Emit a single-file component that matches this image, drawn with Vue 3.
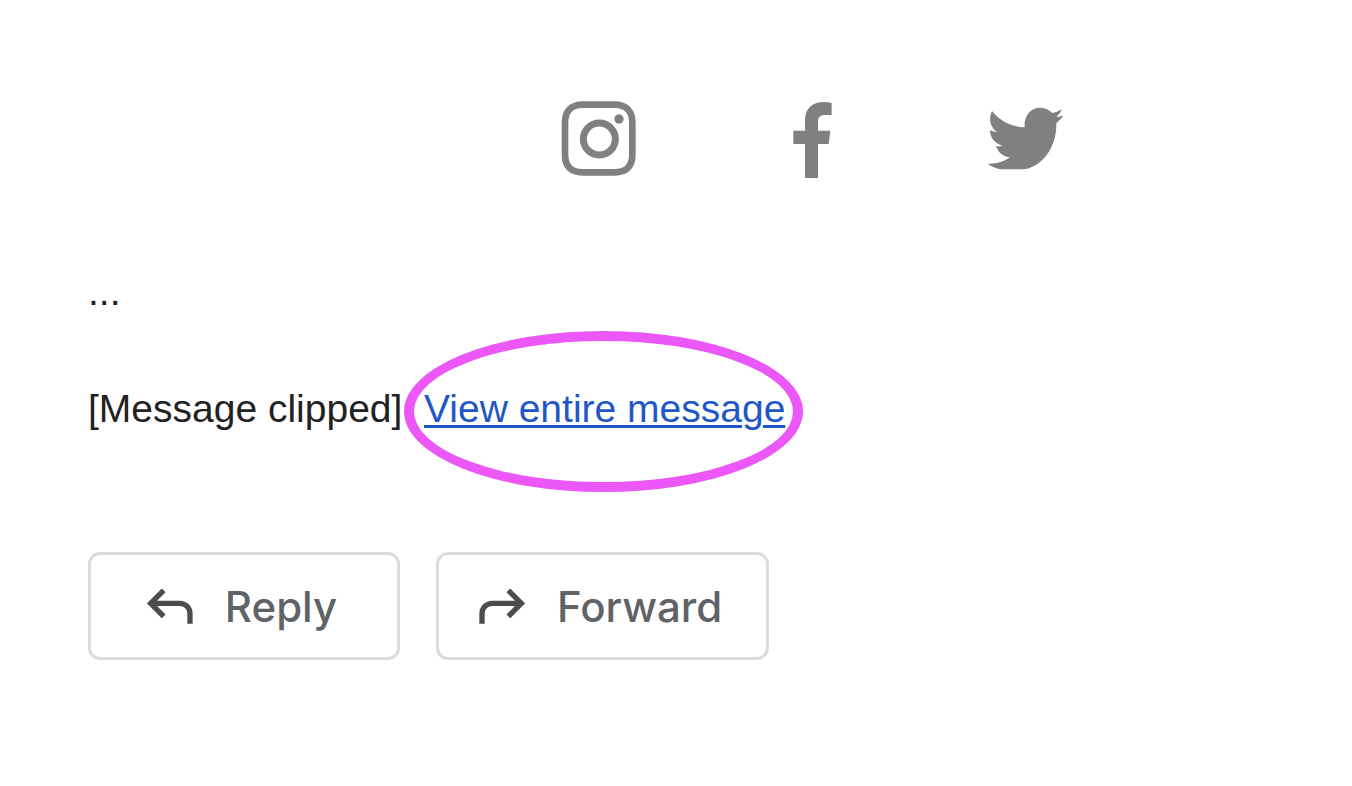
<template>
    <main class="message">
        <nav class="social">
            <a href="#" aria-label="Instagram">
                <svg class="social-icon" viewBox="33 33 228 231">
                    <path fill="none" stroke="currentColor" stroke-width="20" d="M98 44H194C229 44 247 63 247 98V194C247 229 229 247 194 247H98C63 247 45 229 45 194V98C45 63 63 44 98 44Z" />
                    <circle cx="148" cy="147" r="48" fill="none" stroke="currentColor" stroke-width="21" />
                    <circle cx="207" cy="87" r="14" fill="currentColor" />
                </svg>
            </a>
            <a href="#" aria-label="Facebook">
                <svg class="social-icon" viewBox="-18 33 228 231">
                    <path fill="currentColor" d="M75 264V162H40V122H75V92C75 55 97 36 130 36Q146 36 155 39V75H136C120 75 114 82 114 97V122H151L146 162H114V264Z" />
                </svg>
            </a>
            <a href="#" aria-label="Twitter">
                <svg class="social-icon" viewBox="37 33 228 231">
                    <path fill="currentColor" d="M52 63C76 93 109 110 150 112C147 78 167 53 197 53C212 53 224 60 233 69Q248 66 262 58Q257 71 245 81Q256 80 267 76Q258 89 245 99C247 166 208 228 147 238H78Q56 234 39 221C66 222 86 216 106 202C85 200 70 187 64 168Q74 170 83 167C60 161 46 143 46 121Q56 126 67 126C46 111 41 84 52 63Z" />
                </svg>
            </a>
        </nav>

        <p class="trimmed">...</p>

        <p class="clipped">
            [Message clipped]&nbsp;
            <span class="highlight"><a href="#" class="view-link">View entire message</a></span>
        </p>

        <div class="actions">
            <button v-for="action in actions" :key="action.label" type="button" class="action-btn">
                <svg class="action-icon" :class="{ flipped: action.flipped }" viewBox="21 24 138 108">
                    <path d="M71 31L32 70L71 109M32 70H118C138 70 150 84 150 102V131" />
                </svg>
                {{ action.label }}
            </button>
        </div>
    </main>
</template>

<script setup>
const actions = [
    { label: 'Reply', flipped: false },
    { label: 'Forward', flipped: true }
];
</script>

<style scoped>
.message {
    padding: 101px 0 120px 88px;
    color: #222222;
    font-family: "Liberation Sans", Arial, sans-serif;
    font-size: 39px;
    line-height: 58px;
}

.social {
    display: flex;
    justify-content: center;
    gap: 137px;
    padding-left: 184px;
    margin-bottom: 85px;
}

.social a {
    color: #808080;
}

.social-icon {
    display: block;
    width: 76px;
    height: 77px;
}

.trimmed {
    margin: 0 0 59px;
}

.clipped {
    margin: 0 0 114px;
}

.highlight {
    position: relative;
    display: inline-block;
}

/* Marker ring drawn over the link */
.highlight::after {
    content: "";
    position: absolute;
    top: -49px;
    bottom: -54px;
    left: -20px;
    right: -18px;
    border: 10px solid #ec58f8;
    border-radius: 50%;
    pointer-events: none;
}

.view-link {
    color: #1f57c9;
    text-decoration-thickness: 3px;
    text-underline-offset: 3px;
}

.actions {
    display: flex;
    flex-wrap: wrap;
    gap: 36px;
}

.action-btn {
    display: flex;
    align-items: center;
    justify-content: center;
    gap: 32px;
    min-width: 312px;
    height: 108px;
    padding: 0 44px 0 40px;
    border: 3px solid #dadbe0;
    border-radius: 12px;
    background: #ffffff;
    color: #5f6368;
    font-family: Inter, sans-serif;
    font-size: 42px;
    font-weight: 500;
    cursor: pointer;
}

.action-icon {
    width: 46px;
    height: 36px;
    fill: none;
    stroke: #4d4d4d;
    stroke-width: 16px;
}

.flipped {
    transform: scaleX(-1);
}
</style>

<style>
body {
    margin: 0;
    background: #ffffff;
}
</style>
